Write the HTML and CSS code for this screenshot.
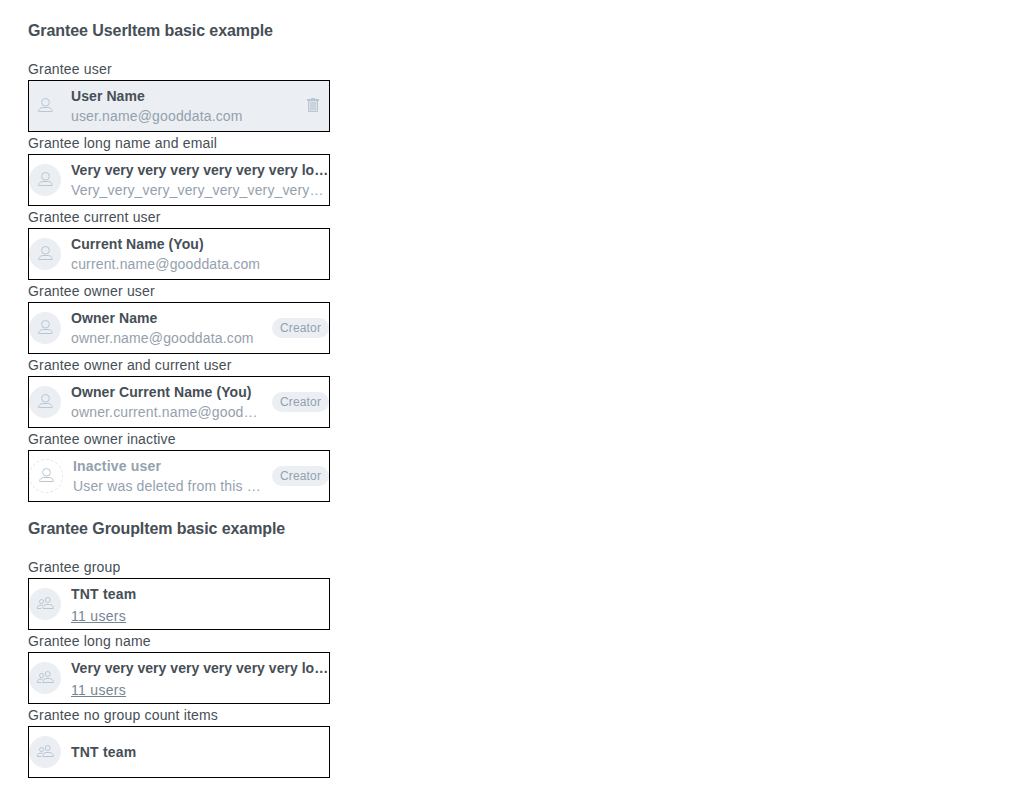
FILE: index.html
```html
<!DOCTYPE html>
<html lang="en">
<head>
<meta charset="utf-8">
<title>Grantee items</title>
<link rel="stylesheet" href="styles.css">
</head>
<body>
<svg class="defs" width="0" height="0">
  <symbol id="user" viewBox="0 0 16 16">
    <ellipse cx="8.5" cy="4.3" rx="3.9" ry="3.8"/>
    <path d="M1.7 13.5V12.6C1.9 10.8 3.7 9.7 5.8 9.5H11.2C13.3 9.7 14.9 10.8 15.2 12.6V13.5Z"/>
  </symbol>
  <symbol id="group" viewBox="0 0 18 14">
    <circle cx="11.7" cy="3" r="2.5"/>
    <path d="M6.9 11.5V10.6C7.1 8.8 8.5 7.5 10.1 7.5H13.6C15.4 7.5 17 8.8 17.3 10.6V11.5Z"/>
    <circle cx="5.5" cy="4.5" r="2"/>
    <path d="M5.3 11.5H1.4V10.8C1.5 9.2 2.6 8.2 4 8.2H6.5"/>
  </symbol>
</svg>
<main class="page">
  <section>
    <h4 class="title">Grantee UserItem basic example</h4>
    <div class="label">Grantee user</div>
    <div class="item item-hover">
      <span class="avatar"><svg class="icon-user"><use href="#user"/></svg></span>
      <div class="content"><div class="name">User Name</div><div class="detail">user.name@gooddata.com</div></div>
      <svg class="trash" viewBox="0 0 12 14"><path class="lid" d="M4 0H8V1H12V3H0V1H4Z"/><path class="can" d="M1.5 3V13.5H10.5V3M4 4V12M6 4V12M8 4V12"/></svg>
    </div>
    <div class="label">Grantee long name and email</div>
    <div class="item">
      <span class="avatar"><svg class="icon-user"><use href="#user"/></svg></span>
      <div class="content"><div class="name name-long">Very very very very very very very long name</div><div class="detail">Very_very_very_very_very_very_very_long_email@gooddata.com</div></div>
    </div>
    <div class="label">Grantee current user</div>
    <div class="item">
      <span class="avatar"><svg class="icon-user"><use href="#user"/></svg></span>
      <div class="content"><div class="name">Current Name (You)</div><div class="detail">current.name@gooddata.com</div></div>
    </div>
    <div class="label">Grantee owner user</div>
    <div class="item">
      <span class="avatar"><svg class="icon-user"><use href="#user"/></svg></span>
      <div class="content"><div class="name">Owner Name</div><div class="detail">owner.name@gooddata.com</div></div>
      <span class="badge">Creator</span>
    </div>
    <div class="label">Grantee owner and current user</div>
    <div class="item">
      <span class="avatar"><svg class="icon-user"><use href="#user"/></svg></span>
      <div class="content"><div class="name">Owner Current Name (You)</div><div class="detail">owner.current.name@gooddata.com</div></div>
      <span class="badge">Creator</span>
    </div>
    <div class="label">Grantee owner inactive</div>
    <div class="item item-inactive">
      <span class="avatar"><svg class="icon-user"><use href="#user"/></svg></span>
      <div class="content"><div class="name">Inactive user</div><div class="detail">User was deleted from this organization</div></div>
      <span class="badge">Creator</span>
    </div>
  </section>
  <section>
    <h4 class="title">Grantee GroupItem basic example</h4>
    <div class="label">Grantee group</div>
    <div class="item">
      <span class="avatar"><svg class="icon-group"><use href="#group"/></svg></span>
      <div class="content"><div class="name name-short">TNT team</div><div class="count">11 users</div></div>
    </div>
    <div class="label">Grantee long name</div>
    <div class="item">
      <span class="avatar"><svg class="icon-group"><use href="#group"/></svg></span>
      <div class="content"><div class="name name-long">Very very very very very very very long name</div><div class="count">11 users</div></div>
    </div>
    <div class="label">Grantee no group count items</div>
    <div class="item">
      <span class="avatar"><svg class="icon-group"><use href="#group"/></svg></span>
      <div class="content"><div class="name name-short">TNT team</div></div>
    </div>
  </section>
</main>
</body>
</html>
```
FILE: styles.css
```css
* { box-sizing: border-box; }
body { margin: 0; background: #fff; color: #464e56; font: 14px/22px "Liberation Sans", Arial, sans-serif; letter-spacing: .17px; }
.defs { display: block; }
.page { width: 330px; padding: 4px 0 0 28px; }
.title { margin: 0; padding: 16px 0; font-size: 16px; line-height: 22px; white-space: nowrap; letter-spacing: -.08px; }
.label { height: 22px; white-space: nowrap; }
.item { display: flex; align-items: center; width: 302px; height: 52px; border: 1px solid #000; }
.item-hover { background: #ebeff4; }
.avatar { display: flex; align-items: center; justify-content: center; flex: none; width: 32px; height: 32px; margin-right: 10px; border-radius: 50%; background: #ebeff4; }
.icon-user { width: 16px; height: 16px; fill: none; stroke: #b9c6d1; stroke-width: 1; }
.icon-group { width: 18px; height: 14px; fill: none; stroke: #b9c6d1; stroke-width: 1; }
.content { flex: 1; min-width: 0; }
.name, .detail { overflow: hidden; text-overflow: ellipsis; white-space: nowrap; line-height: 20px; height: 20px; }
.name { font-weight: 700; letter-spacing: .08px; }
.name-short { letter-spacing: .2px; }
.name-long { letter-spacing: .03px; }
.detail { color: #94a1ad; letter-spacing: .15px; }
.count { height: 20px; line-height: 24px; color: #778491; text-decoration: underline; letter-spacing: .3px; }
.badge { flex: none; width: 57px; height: 20px; margin-left: 10px; padding: 0 8px; border-radius: 10px; background: #ebeff4; color: #94a1ad; font-size: 12px; line-height: 20px; letter-spacing: .15px; white-space: nowrap; }
.trash { flex: none; width: 12px; height: 14px; margin-right: 10px; margin-bottom: 2px; }
.trash .lid { fill: #b9c6d1; }
.trash .can { fill: #d8e0e8; stroke: #b9c6d1; }
.item-inactive .avatar { width: 34px; height: 34px; border: 1px dashed #e4e9ef; background: transparent; }
.item-inactive .name { color: #94a1ad; letter-spacing: .2px; }
```
